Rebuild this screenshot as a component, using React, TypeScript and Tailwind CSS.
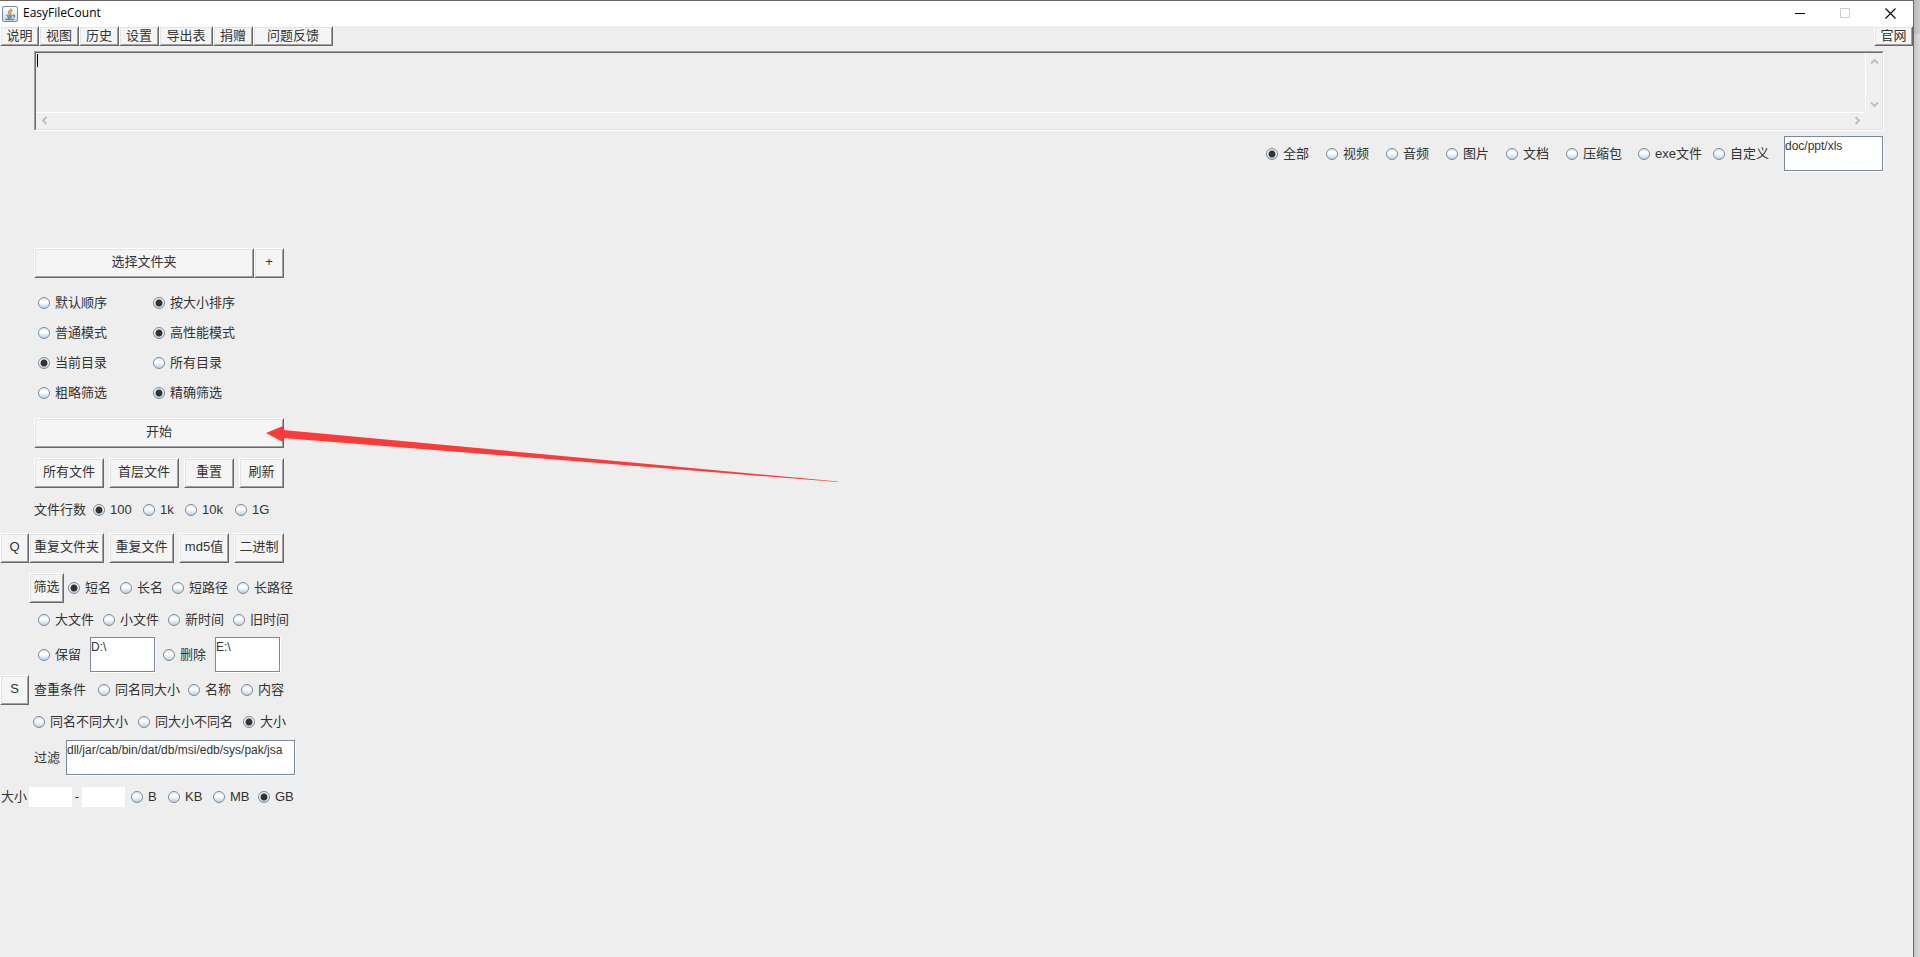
import { useState } from "react";
import type { ReactNode } from "react";

type Option = { label: string; width: string };

const bevel =
  "shrink-0 border border-t-white border-l-white border-r-[#696969] border-b-[#696969] bg-[#f5f5f5] text-center leading-4 whitespace-nowrap shadow-[inset_1px_1px_0_#e3e3e3,inset_-1px_-1px_0_#a0a0a0]";

const fieldBox =
  "h-[35px] shrink-0 resize-none overflow-hidden border border-[#7a8a99] bg-white pt-px text-xs leading-4 shadow-[1px_1px_0_#fff] outline-none";

const menuItems: Option[] = [
  { label: "说明", width: "w-[39px]" },
  { label: "视图", width: "w-10" },
  { label: "历史", width: "w-10" },
  { label: "设置", width: "w-10" },
  { label: "导出表", width: "w-[54px]" },
  { label: "捐赠", width: "w-10" },
  { label: "问题反馈", width: "w-20" },
];

const fileTypes: Option[] = [
  { label: "全部", width: "w-15" },
  { label: "视频", width: "w-15" },
  { label: "音频", width: "w-15" },
  { label: "图片", width: "w-15" },
  { label: "文档", width: "w-15" },
  { label: "压缩包", width: "w-[72px]" },
  { label: "exe文件", width: "w-[75px]" },
  { label: "自定义", width: "w-[71px]" },
];

const modes = [
  { name: "order", options: ["默认顺序", "按大小排序"], selected: 1 },
  { name: "mode", options: ["普通模式", "高性能模式"], selected: 1 },
  { name: "directory", options: ["当前目录", "所有目录"], selected: 0 },
  { name: "precision", options: ["粗略筛选", "精确筛选"], selected: 1 },
];

function BevelButton({
  width,
  tall = true,
  children,
}: {
  width: string;
  tall?: boolean;
  children: ReactNode;
}) {
  return (
    <button
      type="button"
      className={`${bevel} ${width} ${tall ? "h-[30px] pb-0.5" : "h-5"}`}
    >
      {children}
    </button>
  );
}

function Radio({
  name,
  label,
  width,
  checked = false,
}: {
  name: string;
  label: string;
  width: string;
  checked?: boolean;
}) {
  return (
    <label
      className={`flex shrink-0 items-center gap-[5px] whitespace-nowrap ${width}`}
    >
      <input
        type="radio"
        name={name}
        defaultChecked={checked}
        className="size-3 shrink-0 appearance-none rounded-full border border-[#7a8a99] bg-[linear-gradient(#dde8f3,#ffffff_35%,#ffffff_45%,#b8cfe5)] checked:bg-[radial-gradient(circle,#333_0,#333_3px,transparent_4px),linear-gradient(#dde8f3,#ffffff_35%,#ffffff_45%,#b8cfe5)]"
      />
      {label}
    </label>
  );
}

function RadioSet({
  name,
  options,
  selected,
}: {
  name: string;
  options: Option[];
  selected?: number;
}) {
  return (
    <>
      {options.map((option, index) => (
        <Radio
          key={option.label}
          name={name}
          label={option.label}
          width={option.width}
          checked={index === selected}
        />
      ))}
    </>
  );
}

function Chevron({ d, label }: { d: string; label: string }) {
  return (
    <button
      type="button"
      aria-label={label}
      className="flex size-4 items-center justify-center"
    >
      <svg width="9" height="9" viewBox="0 0 9 9" fill="none">
        <path d={d} stroke="#bfbfbf" strokeWidth="2" />
      </svg>
    </button>
  );
}

function JavaIcon() {
  return (
    <svg width="16" height="16" viewBox="0 0 16 16" fill="none">
      <defs>
        <linearGradient id="tile" x1="0" y1="0" x2="0" y2="1">
          <stop offset="0" stopColor="#ffffff" />
          <stop offset="1" stopColor="#d3dde6" />
        </linearGradient>
      </defs>
      <rect x=".5" y=".5" width="15" height="15" rx="1.5" fill="url(#tile)" stroke="#6d8ca5" />
      <path d="M9.2 2.3C9.7 4 6 5 6.5 6.7c.2.7.8 1 .9 1.8M10.4 4.4C8.8 5.2 8.1 6.2 8.6 7c.4.6.2 1.1-.2 1.5" stroke="#e88324" strokeWidth="1.3" />
      <path d="M4.2 9.3h6.3M5 10.8h5M5.6 12.1h3.8M10.8 9.1c2.5-.4 2.5 1.8-.1 2.2" stroke="#477ba3" strokeWidth="1.1" />
      <path d="M3 13c2.5 1 7.7.9 9.7 0" stroke="#477ba3" strokeWidth="1.1" />
    </svg>
  );
}

function TitleBar() {
  return (
    <header className="flex h-[26px] items-center justify-between border-t border-[#696969] bg-white text-black">
      <div className="flex items-center gap-[5px] pl-0.5">
        <JavaIcon />
        <h1 className="pb-0.5 font-['Open_Sans',sans-serif] text-xs">EasyFileCount</h1>
      </div>
      <div className="flex">
        <button type="button" aria-label="最小化" className="flex h-6 w-[45px] items-center justify-center">
          <svg width="11" height="11" viewBox="0 0 11 11">
            <path d="M0 5.5h10" stroke="#000" />
          </svg>
        </button>
        <button type="button" aria-label="最大化" disabled className="flex h-6 w-[45px] items-center justify-center">
          <svg width="11" height="11" viewBox="0 0 11 11" fill="none">
            <path d="M.5.5h9v9h-9z" stroke="#ccc" />
          </svg>
        </button>
        <button type="button" aria-label="关闭" className="flex h-6 w-[45px] items-center justify-center">
          <svg width="11" height="11" viewBox="0 0 11 11">
            <path d="M.5.5l10 10M10.5.5l-10 10" stroke="#000" strokeWidth="1.1" />
          </svg>
        </button>
      </div>
    </header>
  );
}

function OutputArea() {
  const [text, setText] = useState("");

  return (
    <div className="mt-[5px] mr-[29px] ml-[34px] h-20 border border-t-[#a0a0a0] border-r-white border-b-white border-l-[#a0a0a0]">
      <div className="grid h-full grid-cols-[1fr_17px] grid-rows-[1fr_17px] border border-t-[#696969] border-r-[#e3e3e3] border-b-[#e3e3e3] border-l-[#696969]">
        <div className="relative">
          <textarea
            aria-label="输出"
            value={text}
            onChange={(e) => setText(e.target.value)}
            className="block h-full w-full resize-none overflow-hidden bg-transparent px-px outline-none"
          />
          {text === "" && (
            <span className="absolute top-px left-px h-[13px] w-px bg-black" />
          )}
        </div>
        <div className="flex flex-col items-start justify-between border-l border-white bg-[#f0f0f0]">
          <Chevron label="向上滚动" d="M1 6.5l3.5-3.5L8 6.5" />
          <Chevron label="向下滚动" d="M1 2.5L4.5 6 8 2.5" />
        </div>
        <div className="flex items-center justify-between border-t border-white bg-[#f0f0f0] pb-0.5">
          <Chevron label="向左滚动" d="M6.5 1L3 4.5 6.5 8" />
          <Chevron label="向右滚动" d="M2.5 1L6 4.5 2.5 8" />
        </div>
        <div className="bg-[#f0f0f0]" />
      </div>
    </div>
  );
}

function Sidebar() {
  return (
    <aside className="mt-[77px] w-[300px]">
      <div className="flex pl-[34px]">
        <BevelButton width="w-[220px]">选择文件夹</BevelButton>
        <BevelButton width="w-[30px]">+</BevelButton>
      </div>

      <div className="my-2.5 pl-[38px]">
        {modes.map((mode) => (
          <div key={mode.name} className="flex h-[30px] items-center">
            <RadioSet
              name={mode.name}
              selected={mode.selected}
              options={mode.options.map((label) => ({ label, width: "w-[115px]" }))}
            />
          </div>
        ))}
      </div>

      <div className="relative ml-[34px] flex w-[250px]">
        <BevelButton width="w-full">开始</BevelButton>
        <svg
          width="576"
          height="60"
          viewBox="0 0 576 60"
          className="pointer-events-none absolute top-2 left-[232px] max-w-none"
        >
          <path d="M0 7L17 0V4L572 55.5V56L17 12V16z" fill="#fc3a38" />
        </svg>
      </div>

      <div className="mt-2.5 flex gap-[5px] pl-[34px]">
        <BevelButton width="w-[70px]">所有文件</BevelButton>
        <BevelButton width="w-[70px]">首层文件</BevelButton>
        <BevelButton width="w-[50px]">重置</BevelButton>
        <BevelButton width="w-[45px]">刷新</BevelButton>
      </div>

      <div className="mt-[7px] mb-2 flex h-[30px] items-center pl-[34px]">
        <span className="w-[59px] shrink-0">文件行数</span>
        <RadioSet
          name="lines"
          selected={0}
          options={[
            { label: "100", width: "w-[50px]" },
            { label: "1k", width: "w-[42px]" },
            { label: "10k", width: "w-[50px]" },
            { label: "1G", width: "w-10" },
          ]}
        />
      </div>

      <div className="flex gap-[5px]">
        <div className="flex">
          <BevelButton width="w-[29px]">Q</BevelButton>
          <BevelButton width="w-[75px]">重复文件夹</BevelButton>
        </div>
        <BevelButton width="w-[65px]">重复文件</BevelButton>
        <BevelButton width="w-[50px]">md5值</BevelButton>
        <BevelButton width="w-[50px]">二进制</BevelButton>
      </div>

      <div className="mt-2.5 flex items-center pl-[29px]">
        <div className="flex w-[39px] shrink-0">
          <BevelButton width="w-[35px]">筛选</BevelButton>
        </div>
        <RadioSet
          name="pick"
          selected={0}
          options={[
            { label: "短名", width: "w-[52px]" },
            { label: "长名", width: "w-[52px]" },
            { label: "短路径", width: "w-[65px]" },
            { label: "长路径", width: "w-[60px]" },
          ]}
        />
      </div>

      <div className="my-0.5 flex h-[30px] items-center pl-[38px]">
        <RadioSet
          name="pick"
          options={[
            { label: "大文件", width: "w-[65px]" },
            { label: "小文件", width: "w-[65px]" },
            { label: "新时间", width: "w-[65px]" },
            { label: "旧时间", width: "w-[65px]" },
          ]}
        />
      </div>

      <div className="flex items-center pl-[38px]">
        <Radio name="pick" label="保留" width="w-[52px]" />
        <textarea aria-label="保留路径" defaultValue="D:\" className={`${fieldBox} mr-2 w-[65px]`} />
        <Radio name="pick" label="删除" width="w-[52px]" />
        <textarea aria-label="删除路径" defaultValue="E:\" className={`${fieldBox} w-[65px]`} />
      </div>

      <div className="mt-[3px] flex items-center">
        <BevelButton width="w-[29px]">S</BevelButton>
        <span className="w-[69px] shrink-0 pl-[5px]">查重条件</span>
        <RadioSet
          name="duplicate"
          options={[
            { label: "同名同大小", width: "w-[90px]" },
            { label: "名称", width: "w-[53px]" },
            { label: "内容", width: "w-[50px]" },
          ]}
        />
      </div>

      <div className="mt-0.5 flex h-[30px] items-center pl-[33px]">
        <RadioSet
          name="duplicate"
          selected={2}
          options={[
            { label: "同名不同大小", width: "w-[105px]" },
            { label: "同大小不同名", width: "w-[105px]" },
            { label: "大小", width: "w-[50px]" },
          ]}
        />
      </div>

      <div className="mt-[3px] flex items-center pl-[34px]">
        <label htmlFor="exclude" className="w-8 shrink-0">
          过滤
        </label>
        <textarea
          id="exclude"
          defaultValue="dll/jar/cab/bin/dat/db/msi/edb/sys/pak/jsa"
          className={`${fieldBox} w-[229px]`}
        />
      </div>

      <div className="mt-3 flex h-5 items-center pl-px">
        <label htmlFor="min-size" className="w-7 shrink-0">
          大小
        </label>
        <input id="min-size" type="text" className="h-5 w-[43px] shrink-0 bg-white outline-none" />
        <span className="w-2.5 shrink-0 text-center">-</span>
        <input aria-label="最大大小" type="text" className="mr-1.5 h-5 w-[43px] shrink-0 bg-white outline-none" />
        <RadioSet
          name="unit"
          selected={3}
          options={[
            { label: "B", width: "w-[37px]" },
            { label: "KB", width: "w-[45px]" },
            { label: "MB", width: "w-[45px]" },
            { label: "GB", width: "w-10" },
          ]}
        />
      </div>
    </aside>
  );
}

export default function App() {
  return (
    <div className="flex min-h-screen font-['Liberation_Sans','Noto_Sans_CJK_SC',sans-serif] text-[13px] leading-4 text-[#333]">
      <div className="min-w-0 flex-1 border-r border-[#696969] bg-[#eee]">
        <TitleBar />
        <nav className="flex">
          {menuItems.map((item) => (
            <BevelButton key={item.label} width={item.width} tall={false}>
              {item.label}
            </BevelButton>
          ))}
          <div className="ml-auto flex">
            <BevelButton width="w-[39px]" tall={false}>
              官网
            </BevelButton>
          </div>
        </nav>
        <main>
          <OutputArea />
          <div className="mt-[5px] flex items-center justify-end pr-[30px]">
            <RadioSet name="file-type" options={fileTypes} selected={0} />
            <textarea
              aria-label="自定义类型"
              defaultValue="doc/ppt/xls"
              className={`${fieldBox} w-[99px]`}
            />
          </div>
          <Sidebar />
        </main>
      </div>
      <div className="flex w-1.5 shrink-0 flex-col">
        <div className="h-[34px] bg-linear-to-r from-[#b8b8b8] to-[#cdcdcd]" />
        <div className="flex-1 bg-linear-to-r from-[#c4c4c4] to-[#dcdcdc]" />
      </div>
    </div>
  );
}
